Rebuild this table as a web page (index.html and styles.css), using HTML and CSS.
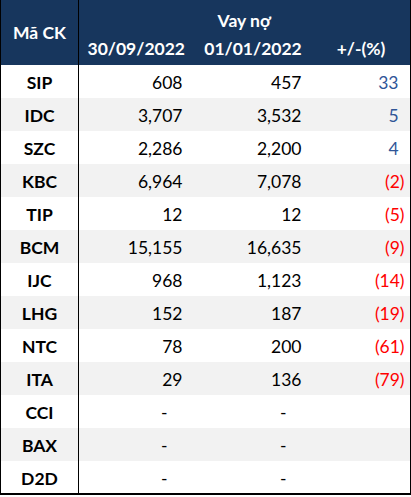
FILE: index.html
```html
<!DOCTYPE html>
<html lang="vi">
<head>
    <meta charset="UTF-8">
    <meta name="viewport" content="width=device-width, initial-scale=1.0">
    <title>Vay nợ</title>
    <link rel="stylesheet" href="styles.css">
</head>
<body>

    <table class="debt">
        <colgroup>
            <col class="c-code">
            <col class="c-q3">
            <col class="c-q1">
            <col class="c-pct">
        </colgroup>
        <thead>
            <tr class="h-top">
                <th rowspan="2" class="code">Mã CK</th>
                <th colspan="3">Vay nợ</th>
            </tr>
            <tr class="h-sub">
                <th>30/09/2022</th>
                <th>01/01/2022</th>
                <th>+/-(%)</th>
            </tr>
        </thead>
        <tbody>
            <tr><td class="code">SIP</td><td class="num"><span class="pos">608</span></td><td class="num"><span class="pos">457</span></td><td class="num up"><span class="pos">33</span></td></tr>
            <tr><td class="code">IDC</td><td class="num"><span class="pos">3,707</span></td><td class="num"><span class="pos">3,532</span></td><td class="num up"><span class="pos">5</span></td></tr>
            <tr><td class="code">SZC</td><td class="num"><span class="pos">2,286</span></td><td class="num"><span class="pos">2,200</span></td><td class="num up"><span class="pos">4</span></td></tr>
            <tr><td class="code">KBC</td><td class="num"><span class="pos">6,964</span></td><td class="num"><span class="pos">7,078</span></td><td class="num down">(2)</td></tr>
            <tr><td class="code">TIP</td><td class="num"><span class="pos">12</span></td><td class="num"><span class="pos">12</span></td><td class="num down">(5)</td></tr>
            <tr><td class="code">BCM</td><td class="num"><span class="pos">15,155</span></td><td class="num"><span class="pos">16,635</span></td><td class="num down">(9)</td></tr>
            <tr><td class="code">IJC</td><td class="num"><span class="pos">968</span></td><td class="num"><span class="pos">1,123</span></td><td class="num down">(14)</td></tr>
            <tr><td class="code">LHG</td><td class="num"><span class="pos">152</span></td><td class="num"><span class="pos">187</span></td><td class="num down">(19)</td></tr>
            <tr><td class="code">NTC</td><td class="num"><span class="pos">78</span></td><td class="num"><span class="pos">200</span></td><td class="num down">(61)</td></tr>
            <tr><td class="code">ITA</td><td class="num"><span class="pos">29</span></td><td class="num"><span class="pos">136</span></td><td class="num down">(79)</td></tr>
            <tr><td class="code">CCI</td><td class="num"><span class="dash">-</span></td><td class="num"><span class="dash">-</span></td><td class="num"></td></tr>
            <tr><td class="code">BAX</td><td class="num"><span class="dash">-</span></td><td class="num"><span class="dash">-</span></td><td class="num"></td></tr>
            <tr><td class="code">D2D</td><td class="num"><span class="dash">-</span></td><td class="num"><span class="dash">-</span></td><td class="num"></td></tr>
        </tbody>
    </table>

</body>
</html>
```

FILE: styles.css
```css
* { margin: 0; padding: 0; box-sizing: border-box; }
body { background: #fff; font-family: Lato, 'Open Sans', sans-serif; font-size: 17.5px; color: #000; }

.debt { width: 410px; border-collapse: collapse; table-layout: fixed; border-left: 1px solid #000; border-right: 2px solid #000; border-bottom: 2px solid #000; }
.c-code { width: 78px; }
.c-q3 { width: 115px; }
.c-q1 { width: 119px; }
.c-pct { width: 98px; }

thead th { background: #17365d; color: #fff; font-weight: bold; text-align: center; padding: 0; }
.h-top th { height: 33px; vertical-align: bottom; padding-bottom: 2px; }
.h-sub th { height: 32px; vertical-align: middle; padding-bottom: 2px; }
th.code { vertical-align: middle; padding-bottom: 0; }

.code { border-right: 1px solid #000; }
tbody tr { height: 33px; }
tbody tr:nth-child(even) { background: #f2f2f2; }
tbody td { padding: 2px 5px 0 0; vertical-align: middle; }
td.code { text-align: center; font-weight: bold; padding-right: 0; }
td.num { text-align: right; }

.pos { padding-right: 6px; }
.dash { padding-right: 21px; }
.up { color: #2f5597; }
.down { color: #ff0000; }
```
